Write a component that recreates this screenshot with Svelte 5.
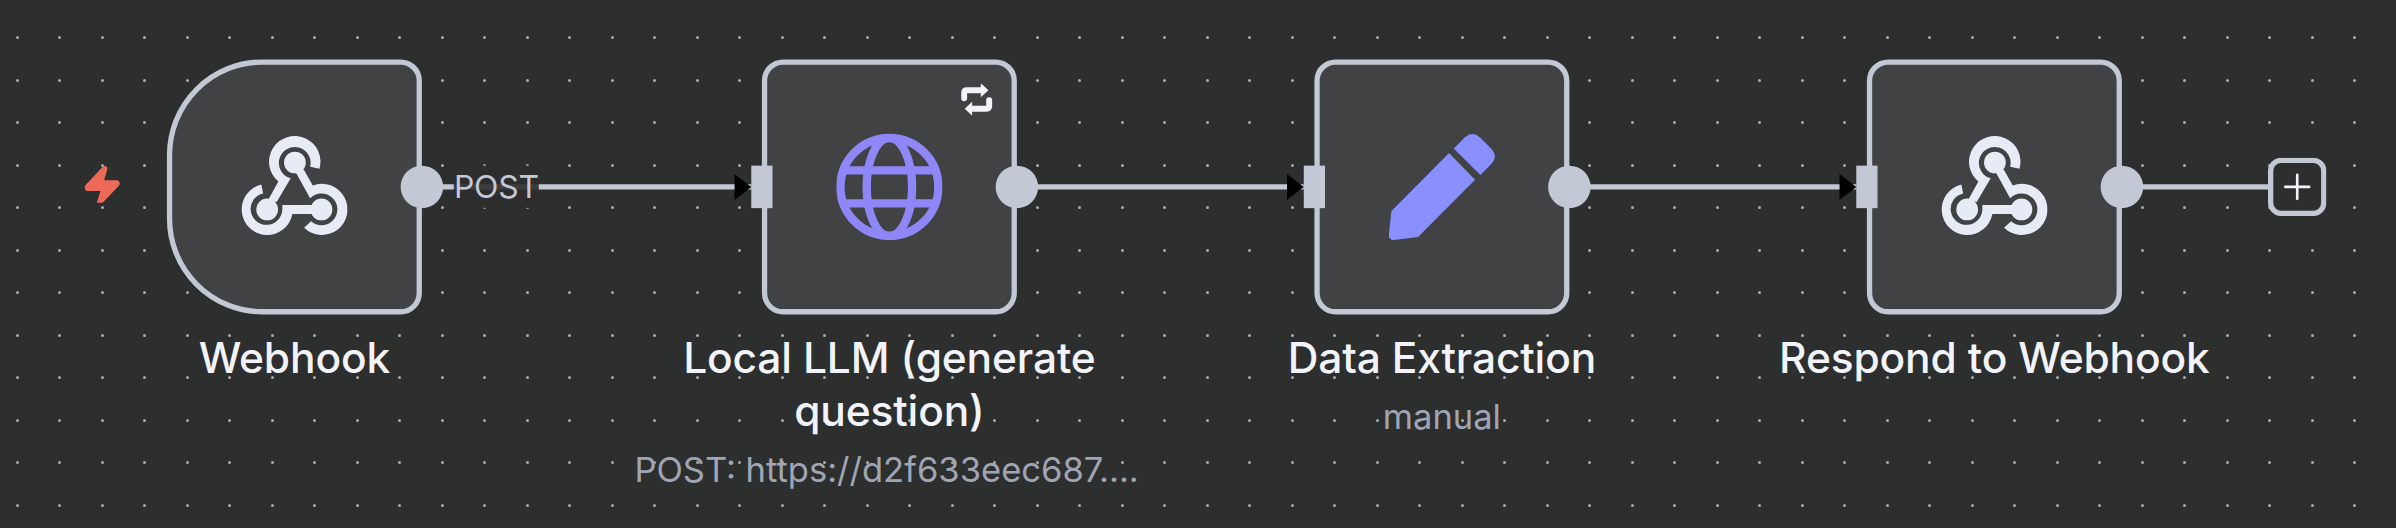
<script>
  const nodes = [
    { x: 0, icon: 'webhook', title: 'Webhook', trigger: true },
    {
      x: 224,
      icon: 'globe',
      title: 'Local LLM (generate question)',
      subtitle: 'POST: https://d2f633eec687....',
      wide: true,
      retry: true,
      input: true
    },
    { x: 432, icon: 'pencil', title: 'Data Extraction', subtitle: 'manual', input: true },
    { x: 640, icon: 'webhook', title: 'Respond to Webhook', input: true }
  ];

  // Each edge runs from an output handle to the next node's input handle.
  const edges = [
    { from: 96, to: 220 },
    { from: 320, to: 428 },
    { from: 528, to: 636 }
  ];
</script>

<main class="canvas">
  <svg class="grid" width="2396" height="528" aria-hidden="true">
    <defs>
      <pattern id="dots" width="85" height="85" patternUnits="userSpaceOnUse">
        <circle cx="17.5" cy="37.5" r="1.5" />
        <circle cx="59.5" cy="37.5" r="1.5" />
        <circle cx="17.5" cy="80.5" r="1.5" />
        <circle cx="59.5" cy="80.5" r="1.5" />
      </pattern>
    </defs>
    <rect width="2396" height="528" fill="url(#dots)" />
  </svg>

  <div class="viewport">
    <svg class="edges" width="840" height="96" viewBox="0 0 840 96" aria-hidden="true">
      {#each edges as edge}
        <path class="line" d="M{edge.from} 48H{edge.to}" />
        <path class="arrow" d="M{edge.to - 6.3} 43.1L{edge.to} 48L{edge.to - 6.3} 52.9Z" />
      {/each}
      <path class="line" d="M736 48H792" />
    </svg>

    <span class="edge-label">POST</span>

    {#each nodes as node}
      <section class="node" style:left="{node.x}px">
        <div class="box" class:trigger={node.trigger}>
          {#if node.icon === 'webhook'}
            <svg class="icon webhook" viewBox="723 402 318 318">
              <circle cx="883.5" cy="488" r="32.5" />
              <circle cx="800.5" cy="628.5" r="32.5" />
              <circle cx="963" cy="628.5" r="32.5" />
              <path d="M957 507L929 501A47.5 47.5 0 1 0 871 535L829 606L803 601L834 545A77 77 0 1 1 957 507Z" />
              <path d="M783 554L788.5 580.5A47.5 47.5 0 1 0 846 628V615H940V642H876A76.5 76.5 0 1 1 783 554Z" />
              <path d="M911 683L932 664A47.5 47.5 0 1 0 929 595L886 517L910 509L937 557A76.5 76.5 0 1 1 911 683Z" />
            </svg>
          {:else if node.icon === 'globe'}
            <svg class="icon globe" viewBox="0 0 318 318">
              <circle cx="159" cy="159" r="146.5" />
              <ellipse cx="159" cy="159" rx="68" ry="147" />
              <path d="M22 109.5H296M22 208.5H296" />
            </svg>
          {:else}
            <svg class="icon pencil" viewBox="387 281 319 319">
              <path d="M568 339L646 419L475 591L402 600Q387 600 387 586L395 513Z" />
              <path d="M582 325L615 292Q638 272 661 292L695 326Q716 350 695 372L662 405Z" />
            </svg>
          {/if}
          {#if node.retry}
            <svg class="retry" viewBox="663 129 93 97">
              <path class="stroke" d="M672 174V158Q672 150 680 150H724M747 180V197Q747 205 739 205H694" />
              <path d="M722 129L745 150L722 171ZM696 184L674 205L696 226Z" />
            </svg>
          {/if}
        </div>
        {#if node.trigger}
          <svg class="bolt" viewBox="255 493 107 119">
            <path d="M309 497Q316 491 322 496Q325 500 323 505L314 537H353Q361 539 361 548Q361 551 357 555L306 608Q300 613 295 609Q291 606 293 600L303 569H263Q255 567 255 559Q255 555 258 551Z" />
          </svg>
        {/if}
        {#if node.input}<i class="handle-in"></i>{/if}
        <i class="handle-out"></i>
        <div class="caption">
          <div class="title">{node.title}</div>
          {#if node.subtitle}<div class="subtitle" class:wide={node.wide}>{node.subtitle}</div>{/if}
        </div>
      </section>
    {/each}

    <svg class="add" viewBox="0 0 22 22" role="img" aria-label="Add node">
      <rect x="1" y="1" width="20" height="20" rx="4" />
      <path d="M6.5 11H15.5M11 6.5V15.5" />
    </svg>
  </div>
</main>

<style>
  :global(body) {
    margin: 0;
    background: #2d2e2e;
  }

  .canvas {
    position: relative;
    box-sizing: border-box;
    width: 2396px;
    height: 528px;
    overflow: hidden;
    background: #2d2e2e;
    border-bottom: 1px solid #323034;
    font-family: Inter, 'Liberation Sans', sans-serif;
  }

  .grid {
    position: absolute;
    inset: 0;
    fill: #a9aaaa;
  }

  .viewport {
    position: absolute;
    top: 0;
    left: 0;
    width: 840px;
    height: 180px;
    transform-origin: 0 0;
    transform: translate(166.9px, 59.4px) scale(2.65625);
  }

  .edges {
    position: absolute;
    top: 0;
    left: 0;
    overflow: visible;
  }

  .line {
    fill: none;
    stroke: #c3c8d5;
    stroke-width: 2;
  }

  .arrow {
    fill: #000;
  }

  .edge-label {
    position: absolute;
    left: 108.1px;
    top: 40px;
    width: 31.9px;
    height: 16px;
    line-height: 15.6px;
    text-align: center;
    white-space: nowrap;
    font-size: 12px;
    letter-spacing: -0.1px;
    color: #c3c8d5;
    background: rgba(45, 46, 46, 0.9);
  }

  .node {
    position: absolute;
    top: 0;
    width: 96px;
    height: 96px;
  }

  .box {
    display: flex;
    align-items: center;
    justify-content: center;
    box-sizing: border-box;
    width: 96px;
    height: 96px;
    border: 2px solid #c3c8d5;
    border-radius: 8px;
    background: #414244;
  }

  .box.trigger {
    border-radius: 36px 8px 8px 36px;
  }

  .icon {
    width: 40px;
    height: 40px;
  }

  .webhook {
    fill: #e7ebf5;
  }

  .globe {
    fill: none;
    stroke: #8f87f7;
    stroke-width: 25;
  }

  .pencil {
    fill: #898fff;
  }

  .retry {
    position: absolute;
    top: 9px;
    right: 9.4px;
    width: 11.7px;
    height: 12.2px;
    fill: #f2f3fb;
  }

  .retry .stroke {
    fill: none;
    stroke: #f2f3fb;
    stroke-width: 18;
    stroke-linecap: round;
  }

  .bolt {
    position: absolute;
    left: -30.7px;
    top: 39.5px;
    width: 13.4px;
    height: 14.9px;
    fill: #ec6a57;
  }

  .handle-in {
    position: absolute;
    left: -4px;
    top: 40px;
    width: 8px;
    height: 16px;
    background: #c3c8d5;
  }

  .handle-out {
    position: absolute;
    right: -8px;
    top: 40px;
    width: 16px;
    height: 16px;
    border-radius: 50%;
    background: #c3c8d5;
  }

  .caption {
    position: absolute;
    top: 102px;
    left: -48px;
    width: 192px;
    display: flex;
    flex-direction: column;
    gap: 4.2px;
    text-align: center;
  }

  .title {
    font-size: 16px;
    font-weight: 500;
    line-height: 20px;
    letter-spacing: -0.06px;
    color: #f2f3fb;
  }

  .subtitle {
    font-size: 13px;
    line-height: 16px;
    white-space: nowrap;
    color: #a0a5b4;
  }

  .subtitle.wide {
    text-align: left;
  }

  .add {
    position: absolute;
    left: 791.4px;
    top: 37px;
    width: 22px;
    height: 22px;
    fill: none;
  }

  .add rect {
    stroke: #c3c8d5;
    stroke-width: 2;
    fill: #2d2e2e;
  }

  .add path {
    stroke: #f2f3fb;
    stroke-width: 1;
    stroke-linecap: round;
  }
</style>
